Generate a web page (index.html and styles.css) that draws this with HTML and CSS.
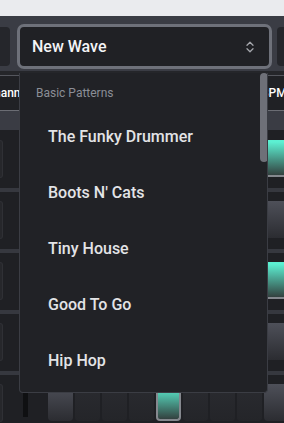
FILE: index.html
```html
<!DOCTYPE html>
<html lang="en">
<head>
<meta charset="utf-8">
<title>Drum Machine</title>
<link rel="stylesheet" href="styles.css">
</head>
<body>
<div class="topstrip"></div>
<header class="bar">
  <div class="side side-left"></div>
  <div class="select">
    <span class="select-value">New Wave</span>
    <svg class="chev" width="8" height="12" viewBox="0 0 8 12" aria-hidden="true">
      <path d="M1 4.2 L4 1.2 L7 4.2 M1 7.8 L4 10.8 L7 7.8" fill="none" stroke="#a3a5ab" stroke-width="1.3" stroke-linecap="round" stroke-linejoin="round"/>
    </svg>
  </div>
  <div class="side side-right"></div>
</header>
<div class="tabs-wrap">
  <div class="tabs">
    <div class="tab tab-channel"><span>Channel</span></div>
    <div class="tab tab-bpm"><span>BPM</span></div>
  </div>
</div>
<div class="band"></div>
<main class="rows">
  <div class="row row-first">
    <div class="chan"></div><div class="vol"></div>
    <div class="pads">
      <div class="pad accent"></div><div class="pad"></div><div class="pad"></div><div class="pad"></div>
      <div class="pad accent"></div><div class="pad"></div><div class="pad"></div><div class="pad"></div>
      <div class="pad on"></div>
    </div>
  </div>
  <div class="row">
    <div class="chan"></div><div class="vol"></div>
    <div class="pads">
      <div class="pad accent"></div><div class="pad"></div><div class="pad"></div><div class="pad"></div>
      <div class="pad accent"></div><div class="pad"></div><div class="pad"></div><div class="pad"></div>
      <div class="pad accent"></div>
    </div>
  </div>
  <div class="row">
    <div class="chan"></div><div class="vol"></div>
    <div class="pads">
      <div class="pad accent"></div><div class="pad"></div><div class="pad"></div><div class="pad"></div>
      <div class="pad accent"></div><div class="pad"></div><div class="pad"></div><div class="pad"></div>
      <div class="pad on"></div>
    </div>
  </div>
  <div class="row">
    <div class="chan"></div><div class="vol"></div>
    <div class="pads">
      <div class="pad accent"></div><div class="pad"></div><div class="pad"></div><div class="pad"></div>
      <div class="pad accent"></div><div class="pad"></div><div class="pad"></div><div class="pad"></div>
      <div class="pad accent"></div>
    </div>
  </div>
  <div class="row">
    <div class="chan"></div><div class="vol"></div>
    <div class="pads">
      <div class="pad accent"></div><div class="pad"></div><div class="pad"></div><div class="pad"></div>
      <div class="pad on"></div><div class="pad"></div><div class="pad"></div><div class="pad"></div>
      <div class="pad accent"></div>
    </div>
  </div>
</main>

<div class="dropdown" role="listbox">
  <div class="dd-label">Basic Patterns</div>
  <div class="dd-item">The Funky Drummer</div>
  <div class="dd-item">Boots N' Cats</div>
  <div class="dd-item">Tiny House</div>
  <div class="dd-item">Good To Go</div>
  <div class="dd-item">Hip Hop</div>
  <div class="dd-thumb"></div>
</div>
</body>
</html>
```
FILE: styles.css
```css
html, body {
  margin: 0;
  padding: 0;
}
body {
  width: 284px;
  height: 423px;
  overflow: hidden;
  position: relative;
  background: #1f2024;
  font-family: Roboto, "Noto Sans", "Liberation Sans", sans-serif;
}

.topstrip {
  height: 16px;
  background: #eaebee;
}

.bar {
  height: 55px;
  box-sizing: border-box;
  padding-top: 8px;
  background: #3a3c44;
  display: flex;
  align-items: flex-start;
}
.side {
  margin-top: 3px;
  width: 10px;
  height: 39px;
  background: #25262b;
}
.side-left { border-radius: 0 4px 4px 0; }
.side-right { margin-left: 5px; border-radius: 4px 0 0 4px; flex: 1; }

.select {
  margin-left: 7px;
  width: 255px;
  height: 45px;
  flex: none;
  box-sizing: border-box;
  border: 3px solid #6e717a;
  border-radius: 7px;
  background: #202125;
  display: flex;
  align-items: center;
  justify-content: space-between;
  padding: 0 15px 0 12px;
}
.select-value {
  color: #f4f4f6;
  font-size: 16px;
  font-weight: 500;
  line-height: 20px;
}
.chev { display: block; }

.tabs-wrap {
  padding-top: 4px;
  background: #25262a;
}
.tabs {
  display: flex;
  height: 36px;
  box-sizing: border-box;
  border-top: 1px solid #54565d;
  border-bottom: 1px solid #6b6d74;
  background: #202125;
}
.tab {
  display: flex;
  align-items: center;
  overflow: hidden;
  white-space: nowrap;
  color: #ffffff;
  font-size: 12px;
  font-weight: 500;
}
.tab-channel {
  width: 30px;
  justify-content: flex-end;
}
.tab-bpm {
  margin-left: 231px;
  flex: 1;
}

.band {
  height: 19px;
  background: #3a3c44;
}

.row {
  display: flex;
  align-items: flex-start;
  padding: 9px 0 10px;
  border-top: 4px solid #36383f;
  background: #1f2024;
}
.row-first {
  padding-top: 10px;
  border-top: 0;
}
.chan {
  width: 3px;
  height: 38px;
  box-sizing: border-box;
  background: #26272b;
  border: 1px solid #2f3035;
  border-left: 0;
  border-radius: 0 4px 4px 0;
  flex: none;
}
.vol {
  margin-left: 20px;
  width: 5px;
  height: 33px;
  background: #0f1012;
  flex: none;
}
.pads {
  margin-left: 20px;
  display: flex;
  gap: 2px;
  flex: none;
}
.pad {
  width: 25px;
  height: 37px;
  box-sizing: border-box;
  border-radius: 4px;
  background: linear-gradient(#2a2b30, #242529);
}
.pad.accent {
  background: linear-gradient(#4e5059, #2b2c31);
}
.pad.on {
  background: linear-gradient(#5cf0d2, #33413f);
  border: 2px solid #85888e;
  border-top-color: #5cf0d2;
}

.dropdown {
  position: absolute;
  left: 19px;
  top: 73px;
  width: 249px;
  height: 320px;
  box-sizing: border-box;
  background: #212226;
  border: 1px solid #3b3d44;
  border-top: 0;
  border-radius: 0 0 4px 4px;
  overflow: hidden;
}
.dd-label {
  padding: 12px 0 0 16px;
  margin-bottom: 8px;
  font-size: 12px;
  line-height: 16px;
  color: #8b8e96;
}
.dd-item {
  height: 56px;
  line-height: 56px;
  padding-left: 28px;
  font-size: 16px;
  font-weight: 500;
  color: #e3e4e6;
  white-space: nowrap;
}
.dd-thumb {
  position: absolute;
  left: 240px;
  top: 0;
  width: 8px;
  height: 89px;
  border-radius: 4px;
  background: #6e7078;
}
```
